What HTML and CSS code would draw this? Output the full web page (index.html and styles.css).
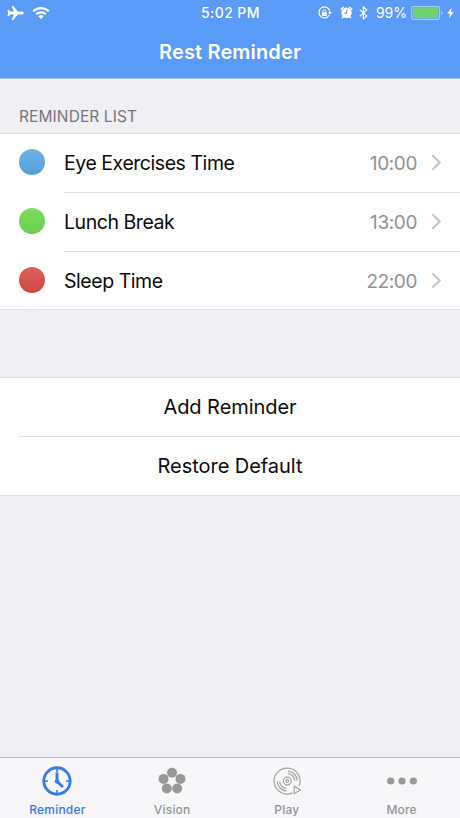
FILE: index.html
```html
<!DOCTYPE html>
<html lang="en">
<head>
    <meta charset="UTF-8">
    <meta name="viewport" content="width=device-width, initial-scale=1.0">
    <title>Rest Reminder</title>
    <link rel="stylesheet" href="styles.css">
</head>
<body>
    <div class="app">
        <header class="header">
            <div class="status-bar">
                <div class="status-left">
                    <svg class="plane" width="17" height="16" viewBox="0 0 17 16">
                        <path fill="#fff" d="M16.800 8c0-.8-.7-1.400-1.600-1.400h-4.400L6.300 1H4.600L6.900 6.600H3.600L1.800 5H.4L1.200 8 .4 11h1.400l1.800-1.600h3.300L4.600 15h1.700l4.500-5.600h4.400c.9 0 1.600-.6 1.600-1.400z"/>
                    </svg>
                    <svg width="18" height="14" viewBox="0 0 18 14">
                        <g fill="none" stroke="#fff" stroke-width="2.300">
                            <path d="M1.200 5.300a11 11 0 0 1 15.600 0"/>
                            <path d="M4.100 8.300a7 7 0 0 1 9.800 0"/>
                        </g>
                        <path fill="#fff" d="M6.300 10.300a3.900 3.900 0 0 1 5.400 0L9 13z"/>
                    </svg>
                </div>
                <div class="clock">5:02 PM</div>
                <div class="status-right">
                    <svg class="lock" width="14" height="14" viewBox="0 0 14 14">
                        <path d="M11.200 9.300A5.500 5.500 0 1 1 11.900 5.600" fill="none" stroke="#fff" stroke-width="1.200"/>
                        <path d="M9.900 6.100h4l-2 2.600z" fill="#fff"/>
                        <rect x="3.900" y="6.200" width="5" height="3.700" rx=".4" fill="#fff"/>
                        <path d="M4.900 6.500V5.200a1.500 1.500 0 0 1 3 0v1.300" fill="none" stroke="#fff"/>
                    </svg>
                    <svg class="alarm" width="13" height="13" viewBox="0 0 13 13">
                        <circle cx="6.500" cy="6.800" r="5.200" fill="#fff"/>
                        <path d="M.8 3.600 3.700 1M12.200 3.600 9.300 1M3.200 10.800 2 12.200M9.800 10.800 11 12.200" stroke="#fff" stroke-width="1.500"/>
                        <path d="M6.700 3.700v3.500H4.300" fill="none" stroke="#5a9bf7" stroke-width="1.100"/>
                    </svg>
                    <svg class="bluetooth" width="9" height="14" viewBox="0 0 9 14">
                        <path d="M.8 3.800 7.800 9.900 4.400 13V1l3.400 3.100-7 6.100" fill="none" stroke="#fff" stroke-width="1.200"/>
                    </svg>
                    <span class="percent">99%</span>
                    <svg class="battery" width="33" height="14" viewBox="0 0 33 14">
                        <rect x=".6" y=".6" width="28" height="12.800" rx="1.800" fill="none" stroke="#a9cbf6" stroke-width="1.100"/>
                        <rect x="2" y="2" width="25.200" height="10" rx=".5" fill="#70d26a"/>
                        <path d="M30.200 5v4c1.800-.6 1.800-3.400 0-4z" fill="#a9cbf6"/>
                    </svg>
                    <svg class="bolt" width="7" height="12" viewBox="0 0 7 12">
                        <path d="M4.800.5.300 6.700h2.700L1.900 11.500 6.700 5H3.900z" fill="#fff"/>
                    </svg>
                </div>
            </div>
            <h1 class="title">Rest Reminder</h1>
        </header>

        <main class="content">
            <h2 class="list-title">REMINDER LIST</h2>
            <div class="list">
                <div class="row">
                    <span class="dot blue"></span>
                    <div class="row-body">
                        <span class="name">Eye Exercises Time</span>
                        <span class="time">10:00</span>
                        <svg class="chevron" width="11" height="17" viewBox="0 0 11 17"><path d="M1.300 1.300 8.700 8.500 1.300 15.700"/></svg>
                    </div>
                </div>
                <div class="row">
                    <span class="dot green"></span>
                    <div class="row-body">
                        <span class="name">Lunch Break</span>
                        <span class="time">13:00</span>
                        <svg class="chevron" width="11" height="17" viewBox="0 0 11 17"><path d="M1.300 1.300 8.700 8.500 1.300 15.700"/></svg>
                    </div>
                </div>
                <div class="row">
                    <span class="dot red"></span>
                    <div class="row-body">
                        <span class="name">Sleep Time</span>
                        <span class="time">22:00</span>
                        <svg class="chevron" width="11" height="17" viewBox="0 0 11 17"><path d="M1.300 1.300 8.700 8.500 1.300 15.700"/></svg>
                    </div>
                </div>
            </div>

            <div class="actions">
                <div class="action">Add Reminder</div>
                <div class="action">Restore Default</div>
            </div>
        </main>

        <nav class="tabs">
            <div class="tab active">
                <svg width="30" height="30" viewBox="0 0 30 30">
                    <circle cx="15" cy="15" r="13.200" fill="none" stroke="#367af0" stroke-width="2.900"/>
                    <path d="M15 2v4M15 24V28M2 15h4M24 15H28" stroke="#367af0" stroke-width="1.600"/>
                    <path d="M15 6.500v9l6 5.500" fill="none" stroke="#367af0" stroke-width="2.900" stroke-linejoin="round"/>
                    <circle cx="15" cy="15.300" r="2.200" fill="#367af0"/>
                </svg>
                <span>Reminder</span>
            </div>
            <div class="tab">
                <svg width="30" height="30" viewBox="0 0 30 30">
                    <g fill="#989898">
                        <circle cx="15" cy="6.800" r="5"/>
                        <circle cx="23.500" cy="12.900" r="5"/>
                        <circle cx="20.200" cy="22.500" r="5"/>
                        <circle cx="9.800" cy="22.500" r="5"/>
                        <circle cx="6.500" cy="12.900" r="5"/>
                    </g>
                </svg>
                <span>Vision</span>
            </div>
            <div class="tab">
                <svg width="30" height="30" viewBox="0 0 30 30">
                    <g fill="none" stroke="#a2a2a3" stroke-width="1.200">
                        <path d="M20.500 26.900A13 13 0 1 1 27.200 19.800"/>
                        <circle cx="15.300" cy="15" r="3.900"/>
                        <circle cx="15.300" cy="15" r="1.400"/>
                        <path d="M5.200 15.500a10 10 0 0 0 9.300 9.400M7.700 15.500a7.500 7.500 0 0 0 6.800 7M25.200 14.500a10 10 0 0 0-9.300-9.400M22.700 14.500a7.500 7.500 0 0 0-6.800-7"/>
                        <path d="M22.200 20.200v7.600l6.200-3.800z"/>
                    </g>
                </svg>
                <span>Play</span>
            </div>
            <div class="tab">
                <svg width="30" height="30" viewBox="0 0 30 30">
                    <g fill="#989898">
                        <circle cx="3.700" cy="15" r="3.600"/>
                        <circle cx="15" cy="15" r="3.600"/>
                        <circle cx="26.300" cy="15" r="3.600"/>
                    </g>
                </svg>
                <span>More</span>
            </div>
        </nav>
    </div>
</body>
</html>
```
FILE: styles.css
```css
body {
    font-family: Inter, "Liberation Sans", sans-serif;
    background-color: #efeff4;
    color: #0b0b0c;
    margin: 0;
}

.app {
    display: flex;
    flex-direction: column;
    height: 818px;
    overflow: hidden;
}

.header {
    height: 78px;
    background-color: #5a9bf7;
    border-bottom: 1px solid #a9c2e9;
    color: white;
}

.status-bar {
    display: grid;
    grid-template-columns: 1fr auto 1fr;
    align-items: center;
    height: 25px;
    padding: 0 6px 0 7px;
}

.status-left {
    display: flex;
    align-items: center;
    gap: 8px;
}

.clock {
    font-size: 14px;
    font-weight: 500;
    letter-spacing: 0.4px;
}

.status-right {
    display: flex;
    align-items: center;
    justify-content: flex-end;
}

.alarm {
    margin-left: 8px;
}

.bluetooth {
    margin-left: 6px;
}

.percent {
    margin-left: 8px;
    font-size: 14px;
}

.battery {
    margin-left: 4px;
}

.bolt {
    margin-left: 3px;
}

.title {
    margin: 0;
    font-size: 20px;
    font-weight: 600;
    letter-spacing: 0.15px;
    line-height: 54px;
    text-align: center;
}

.content {
    flex: 1;
}

.list-title {
    height: 54px;
    margin: 0;
    padding-left: 19px;
    box-sizing: border-box;
    color: #75757a;
    font-size: 15.5px;
    font-weight: 400;
    letter-spacing: 0.1px;
    line-height: 75px;
}

.list,
.actions {
    background-color: white;
    border-top: 1px solid #dedee2;
    border-bottom: 1px solid #dedee2;
}

.row {
    display: flex;
    align-items: center;
    height: 59px;
    padding-left: 19px;
}

.row:last-child {
    height: 57px;
}

.dot {
    width: 26px;
    height: 26px;
    margin: 0 19px 3px 0;
    border-radius: 50%;
}

.row:last-child .dot {
    margin-bottom: 1px;
}

.blue {
    background: linear-gradient(#6ab3e4, #559fda);
}

.green {
    background: linear-gradient(#7bdd5d, #68d14c);
}

.red {
    background: linear-gradient(#df6059, #cb4844);
}

.row-body {
    display: flex;
    flex: 1;
    align-items: center;
    height: 100%;
    padding-right: 18px;
    padding-bottom: 1px;
    box-sizing: border-box;
    border-bottom: 1px solid #e0e0e3;
}

.row:last-child .row-body {
    padding-bottom: 0;
    border-bottom: none;
}

.name {
    flex: 1;
    font-size: 19.5px;
    letter-spacing: -0.45px;
}

.time {
    margin-right: 14px;
    padding-top: 2px;
    color: #919196;
    font-size: 19px;
    letter-spacing: -0.4px;
}

.chevron {
    fill: none;
    stroke: #c5c5ca;
    stroke-width: 2.2;
}

.actions {
    margin-top: 67px;
}

.action {
    height: 59px;
    margin-left: 19px;
    padding-right: 19px;
    box-sizing: border-box;
    border-bottom: 1px solid #e0e0e3;
    font-size: 20px;
    letter-spacing: -0.05px;
    line-height: 58px;
    text-align: center;
}

.action:last-child {
    height: 58px;
    border-bottom: none;
}

.tabs {
    display: flex;
    height: 60px;
    padding-right: 1px;
    background-color: #f7f7fa;
    border-top: 1px solid #bcbcc0;
}

.tab {
    display: flex;
    flex: 1;
    flex-direction: column;
    align-items: center;
    padding-top: 8px;
    color: #949496;
    font-size: 12px;
    font-weight: 500;
    letter-spacing: 0.2px;
}

.tab span {
    margin-top: 6px;
    line-height: 15px;
}

.active {
    color: #367af0;
}
```
